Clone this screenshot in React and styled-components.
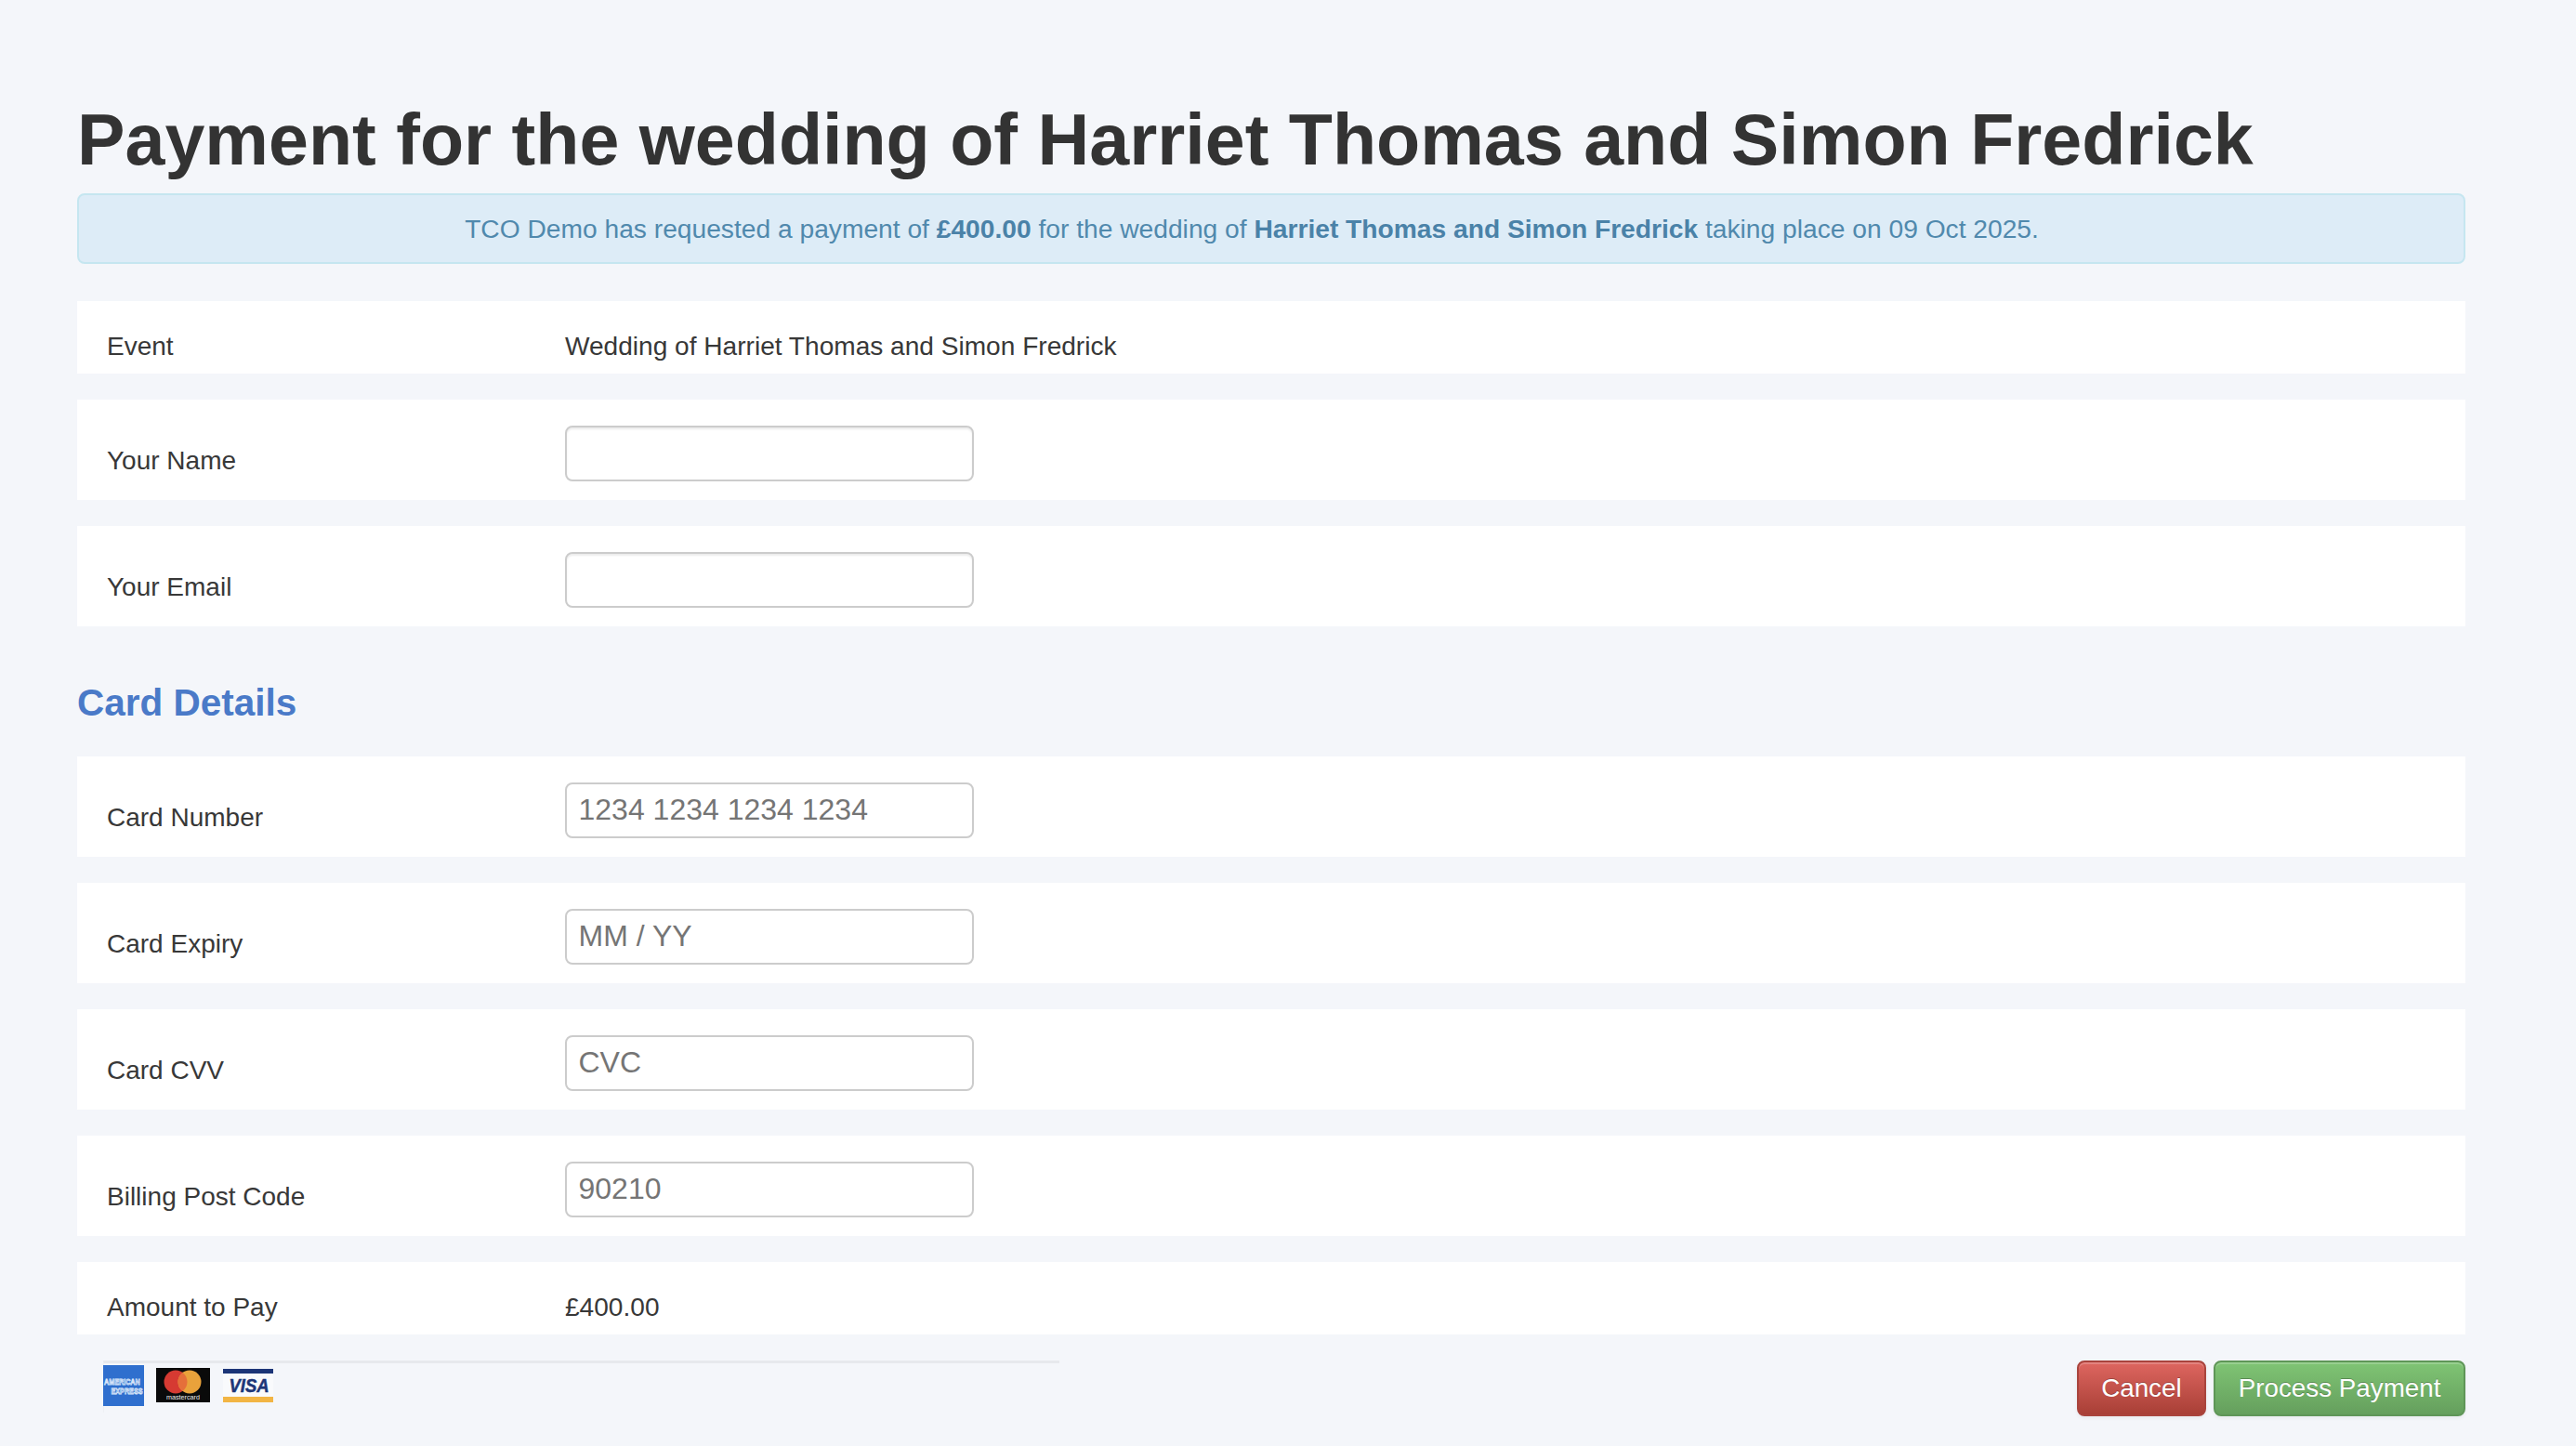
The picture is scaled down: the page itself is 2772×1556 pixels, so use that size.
import React from "react";
import styled, { createGlobalStyle } from "styled-components";

const Global = createGlobalStyle`
  html, body { margin: 0; padding: 0; background: #f4f6fa; height: 100%; overflow: hidden; }
  body { font-family: "Liberation Sans", Arial, sans-serif; color: #333; }
  * { box-sizing: border-box; }
`;
const Page = styled.main`
  padding: 102px 119px 0 83px;
  display: flex;
  flex-direction: column;
`;
const Title = styled.h1`
  margin: 0;
  height: 106px;
  font-size: 77.2px;
  line-height: 96px;
  font-weight: 700;
  color: #333;
  white-space: nowrap;
`;
const Alert = styled.div`
  height: 76px;
  margin-bottom: 40px;
  padding-right: 42px;
  border: 2px solid #c5e6f0;
  border-radius: 8px;
  background: #ddecf7;
  color: #5089ad;
  font-size: 28.2px;
  line-height: 72px;
  text-align: center;
  white-space: nowrap;
  b { font-weight: 700; color: #4a82a8; }
`;
const Rows = styled.div`
  display: flex;
  flex-direction: column;
  gap: 28px;
`;
const Row = styled.div`
  display: grid;
  grid-template-columns: 493px 1fr;
  align-items: start;
  height: ${(p) => (p.$static ? "78px" : "108px")};
  padding: 28px 32px 0;
  background: #fff;
`;
const Label = styled.label`
  font-size: 28px;
  line-height: 40px;
  color: #383838;
  padding-top: ${(p) => (p.$static ? "1px" : "18px")};
`;
const Value = styled.div`
  font-size: 28.08px;
  line-height: 40px;
  padding-top: 1px;
  color: #383838;
`;
const Field = styled.input`
  display: block;
  width: 440px;
  height: 60px;
  padding: 0 13px 2px 12.5px;
  border: 2px solid #ccc;
  border-radius: 8px;
  background: #fff;
  font: 32px "Liberation Sans", Arial, sans-serif;
  color: #333;
  outline: none;
  box-shadow: ${(p) => (p.$plain ? "none" : "inset 0 2px 2px rgba(0,0,0,.075)")};
  &::placeholder { color: #757575; opacity: 1; }
`;
const SectionTitle = styled.h2`
  margin: 0;
  height: 140px;
  padding-top: 28px;
  font-size: 40.5px;
  line-height: 108px;
  font-weight: 700;
  color: #4a7ac8;
`;
const Footer = styled.footer`
  display: flex;
  justify-content: space-between;
  align-items: flex-start;
  margin-top: 28px;
  padding-left: 28px;
`;
const CardStrip = styled.div`
  width: 1029px;
  height: 56px;
  padding-top: 2px;
  display: flex;
  align-items: flex-start;
  border-top: 3px solid #e7e9ed;
  border-left: 1px solid #eef0f4;
`;
const Logo = styled.svg`
  display: block;
  flex: none;
  margin: ${(p) => p.$margin};
`;
const Buttons = styled.div`
  display: flex;
  gap: 8px;
`;
const Button = styled.button`
  height: 60px;
  padding: 0 24.5px;
  border: 2px solid ${(p) => (p.$green ? "#5f9658" : "#a9443d")};
  border-radius: 8px;
  background: ${(p) =>
    p.$green
      ? "linear-gradient(#7fc474, #659f5d)"
      : "linear-gradient(#de6660, #a83f36)"};
  box-shadow: inset 0 2px 0 rgba(255, 255, 255, 0.2), 0 2px 4px rgba(0, 0, 0, 0.05);
  color: #fff;
  font: 27.8px "Liberation Sans", Arial, sans-serif;
  text-shadow: 0 -1px 0 rgba(0, 0, 0, 0.25);
`;

const Amex = () => (
  <Logo $margin="0 0 0 -1px" width="44" height="44" viewBox="0 0 44 44">
    <rect width="44" height="44" fill="#2f6fce" />
    <g transform="scale(1 1.3)" fontFamily="Liberation Sans" fontWeight="700" fontSize="7.2" fill="#3f7bd4" stroke="#dfeafa" strokeWidth="0.6">
      <text x="1" y="16.15">AMERICAN</text>
      <text x="8.5" y="23.85">EXPRESS</text>
    </g>
  </Logo>
);
const Mastercard = () => (
  <Logo $margin="3px 0 0 13px" width="58" height="37" viewBox="0 0 58 37">
    <rect width="58" height="37" fill="#0a0a0a" />
    <circle cx="21" cy="15" r="12.5" fill="#d63a32" />
    <circle cx="36" cy="15" r="12.5" fill="#e9a23b" />
    <path d="M28.5 5a12.5 12.5 0 0 1 0 20a12.5 12.5 0 0 1 0-20z" fill="#e56f3a" />
    <text x="11" y="33.6" fontFamily="Liberation Sans" fontSize="7" fill="#eee" textLength="36" lengthAdjust="spacingAndGlyphs">mastercard</text>
  </Logo>
);
const Visa = () => (
  <Logo $margin="4px 0 0 14px" width="54" height="36" viewBox="0 0 54 36">
    <rect width="54" height="36" fill="#f9fafc" />
    <rect width="54" height="5" fill="#1c3577" />
    <rect y="30" width="54" height="6" fill="#f2b544" />
    <text x="6.5" y="24.7" fontFamily="Liberation Sans" fontWeight="700" fontStyle="italic" fontSize="20" fill="#1c3577" stroke="#1c3577" strokeWidth="0.5" textLength="43" lengthAdjust="spacingAndGlyphs">VISA</text>
  </Logo>
);

export default function App() {
  return (
    <>
      <Global />
      <Page>
        <Title>Payment for the wedding of Harriet Thomas and Simon Fredrick</Title>
        <Alert>
          TCO Demo has requested a payment of <b>£400.00</b> for the wedding of{" "}
          <b>Harriet Thomas and Simon Fredrick</b> taking place on 09 Oct 2025.
        </Alert>
        <Rows>
          <Row $static>
            <Label $static>Event</Label>
            <Value>Wedding of Harriet Thomas and Simon Fredrick</Value>
          </Row>
          <Row>
            <Label>Your Name</Label>
            <Field />
          </Row>
          <Row>
            <Label>Your Email</Label>
            <Field />
          </Row>
        </Rows>
        <SectionTitle>Card Details</SectionTitle>
        <Rows>
          <Row>
            <Label>Card Number</Label>
            <Field $plain placeholder="1234 1234 1234 1234" />
          </Row>
          <Row>
            <Label>Card Expiry</Label>
            <Field $plain placeholder="MM / YY" />
          </Row>
          <Row>
            <Label>Card CVV</Label>
            <Field $plain placeholder="CVC" />
          </Row>
          <Row>
            <Label>Billing Post Code</Label>
            <Field $plain placeholder="90210" />
          </Row>
          <Row $static>
            <Label $static>Amount to Pay</Label>
            <Value>£400.00</Value>
          </Row>
        </Rows>
        <Footer>
          <CardStrip>
            <Amex />
            <Mastercard />
            <Visa />
          </CardStrip>
          <Buttons>
            <Button type="button">Cancel</Button>
            <Button type="button" $green>Process Payment</Button>
          </Buttons>
        </Footer>
      </Page>
    </>
  );
}
